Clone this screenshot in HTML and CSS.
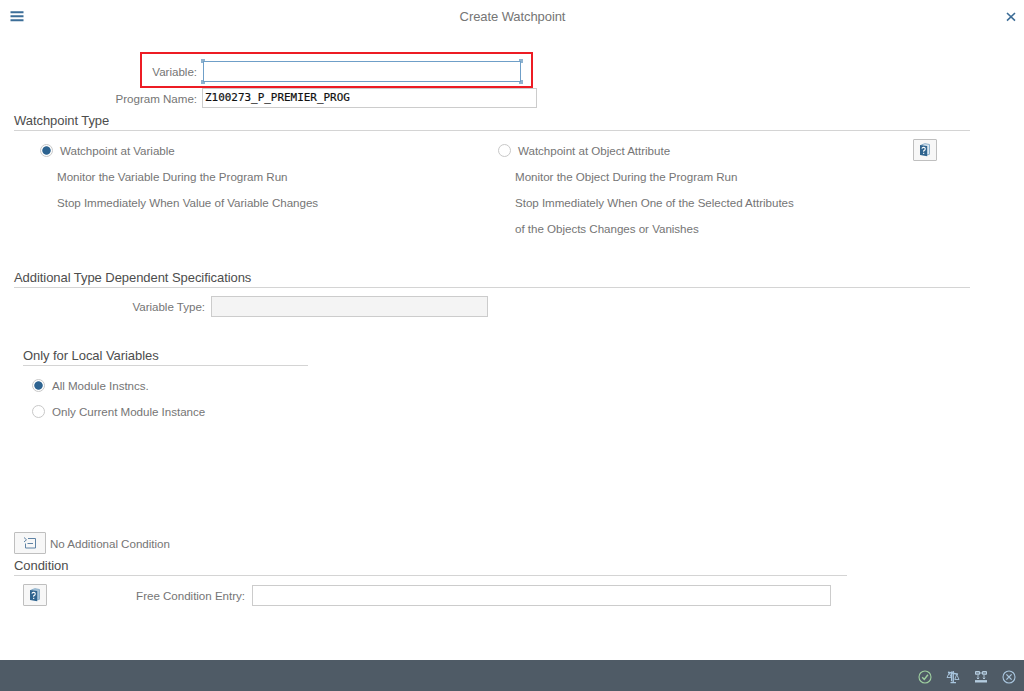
FILE: index.html
```html
<!DOCTYPE html>
<html lang="en">

<head>
    <meta charset="UTF-8">
    <meta name="viewport" content="width=device-width, initial-scale=1.0">
    <title>Create Watchpoint</title>
    <link rel="stylesheet" href="styles.css">
</head>

<body>
    <div class="dialog">
        <header class="header">
            <svg class="menuicon" width="14" height="11" viewBox="0 0 14 11">
                <path d="M0.5 1.3h13M0.5 5.3h13M0.5 9.3h13" stroke="#3c6e98" stroke-width="1.9" />
            </svg>
            <h1>Create Watchpoint</h1>
            <svg class="closeicon" width="10" height="10" viewBox="0 0 10 10">
                <path d="M1 1l8 7.6M9 1l-8 7.6" stroke="#3c6c96" stroke-width="1.6" />
            </svg>
        </header>

        <main class="content">
            <div class="highlight">
                <label class="label" for="variable">Variable:</label>
                <div class="focusbox">
                    <input class="field variable" id="variable" type="text">
                    <span class="corner topleft"></span>
                    <span class="corner topright"></span>
                    <span class="corner bottomleft"></span>
                    <span class="corner bottomright"></span>
                </div>
            </div>
            <div class="programrow">
                <label class="label" for="program">Program Name:</label>
                <input class="field program" id="program" type="text" value="Z100273_P_PREMIER_PROG">
            </div>

            <section class="typesection">
                <h2>Watchpoint Type</h2>
                <div class="types">
                    <div class="typecolumn">
                        <label class="option"><input type="radio" name="type" checked><span>Watchpoint at Variable</span></label>
                        <p>Monitor the Variable During the Program Run</p>
                        <p>Stop Immediately When Value of Variable Changes</p>
                    </div>
                    <div class="typecolumn">
                        <label class="option"><input type="radio" name="type"><span>Watchpoint at Object Attribute</span></label>
                        <p>Monitor the Object During the Program Run</p>
                        <p>Stop Immediately When One of the Selected Attributes</p>
                        <p>of the Objects Changes or Vanishes</p>
                    </div>
                    <button class="iconbutton" aria-label="Help">
                        <svg width="12" height="14" viewBox="0 0 12 14">
                            <path d="M2.5 1.8L6 .7l4.5.8v9.8L8 12z" fill="#dce8f1" stroke="#8db0cb" stroke-width="1" />
                            <path d="M1 2l7.2.9v10.3L1 12z" fill="#2f648f" />
                            <path d="M2.9 5.7q.3-1.4 1.8-1.3 1.7.2 1.5 1.7-.1 1-1.5 1.7v1M4.7 9.8v1.2" fill="none" stroke="#fff" stroke-width="1.1" />
                        </svg>
                    </button>
                </div>
            </section>

            <section class="specsection">
                <h2>Additional Type Dependent Specifications</h2>
                <div class="variabletype">
                    <label class="label" for="vartype">Variable Type:</label>
                    <input class="field" id="vartype" type="text" disabled>
                </div>
                <div class="localvariables">
                    <h2>Only for Local Variables</h2>
                    <label class="option"><input type="radio" name="instance" checked><span>All Module Instncs.</span></label>
                    <label class="option"><input type="radio" name="instance"><span>Only Current Module Instance</span></label>
                </div>
            </section>

            <section class="conditionsection">
                <div class="additional">
                    <button class="iconbutton wide" aria-label="Additional condition">
                        <svg width="14" height="14" viewBox="0 0 14 14">
                            <path d="M1 1.5l2.5 2.3L1 6M5 2.5h7.5v9.5H2.5V7.5M4.5 7.5h5.5" fill="none" stroke="#5f83a5" stroke-width="1" />
                        </svg>
                    </button>
                    <span>No Additional Condition</span>
                </div>
                <h2>Condition</h2>
                <div class="conditionrow">
                    <button class="iconbutton" aria-label="Help">
                        <svg width="12" height="14" viewBox="0 0 12 14">
                            <path d="M2.5 1.8L6 .7l4.5.8v9.8L8 12z" fill="#a8c4d9" stroke="#8db0cb" stroke-width="1" />
                            <path d="M1 2l7.2.9v10.3L1 12z" fill="#2f648f" />
                            <path d="M2.9 5.7q.3-1.4 1.8-1.3 1.7.2 1.5 1.7-.1 1-1.5 1.7v1M4.7 9.8v1.2" fill="none" stroke="#fff" stroke-width="1.1" />
                        </svg>
                    </button>
                    <label class="label" for="condition">Free Condition Entry:</label>
                    <input class="field" id="condition" type="text">
                </div>
            </section>
        </main>

        <footer class="footer">
            <!-- confirm -->
            <svg width="14" height="14" viewBox="0 0 14 14" fill="none" stroke="#9fd0a0">
                <circle cx="7" cy="7" r="6" stroke-width="1.1" />
                <path d="M4.2 7.2l2.1 2.2 3.6-4.6" stroke-width="1.5" />
            </svg>
            <!-- check -->
            <svg width="14" height="14" viewBox="0 0 14 14" fill="none" stroke="#a9c6df">
                <path d="M2 2.3l10 2M7.2 1v11" stroke-width="1.4" />
                <path d="M3.2 3L1 7.5h4.4zM10.7 4.5L8.8 9.5H13z" stroke-width=".9" />
                <path d="M5.5 1.5v9.8M4.5 12.6h5.5" stroke-width="1.1" />
            </svg>
            <!-- options -->
            <svg width="14" height="14" viewBox="0 0 14 14" fill="none" stroke="#b4ccdf">
                <path d="M1.5 1.5h4v2.8h-4zM8.5 1.5h4v2.8h-4zM1.5 3h11" />
                <path d="M4 5v4M2.8 7.8L4 9l1.2-1.2M10 5v4M8.8 7.8L10 9l1.2-1.2" stroke-width=".9" />
                <path d="M1 11.3h12" stroke-width="2.4" />
            </svg>
            <!-- cancel -->
            <svg width="14" height="14" viewBox="0 0 14 14" fill="none" stroke="#a9c6df">
                <circle cx="7" cy="7" r="6" stroke-width="1.1" />
                <path d="M4.4 4.4l5.2 5.2M9.6 4.4L4.4 9.6" stroke-width="1.3" />
            </svg>
        </footer>
    </div>
</body>

</html>
```

FILE: styles.css
```css
* {
    margin: 0;
    padding: 0;
    box-sizing: border-box;
}

body {
    width: 100vw;
    height: 100vh;
    overflow: hidden;
    background-color: #fff;
    font-family: "Liberation Sans", Arial, sans-serif;
    font-size: 11.6px;
    letter-spacing: -0.03px;
    color: #757575;
}

.dialog {
    height: 100%;
    display: flex;
    flex-direction: column;
}

.header {
    height: 33px;
    padding: 0 8px 0 10px;
    display: flex;
    justify-content: space-between;
    align-items: center;
}

h1 {
    margin-right: 5px;
    font-size: 13px;
    font-weight: normal;
    letter-spacing: -0.08px;
}

h2 {
    height: 18px;
    border-bottom: 1px solid #d4d4d4;
    font-size: 13px;
    font-weight: normal;
    letter-spacing: -0.06px;
    line-height: 15px;
    color: #4d4d4d;
}

.content {
    flex: 1;
    padding: 19px 0 0 14px;
}

.highlight {
    width: 393px;
    height: 36px;
    margin-left: 126px;
    padding-top: 3px;
    border: 2px solid #ed1c24;
    display: flex;
    align-items: center;
}

.highlight .label {
    width: 55px;
}

.label {
    text-align: right;
    white-space: nowrap;
}

.focusbox {
    position: relative;
    margin-left: 6px;
}

.field {
    display: block;
    height: 21px;
    border: 1px solid #ccc;
    border-radius: 0;
    background-color: #fff;
    outline: none;
}

.field:disabled {
    background-color: #f4f4f4;
}

.variable {
    width: 318px;
    border-color: #6f9fc8;
}

/* selection marks on the corners of the focused field */
.corner {
    position: absolute;
    width: 4px;
    height: 4px;
    border: 0 solid #8fb3d0;
}

.topleft {
    top: -2px;
    left: -2px;
    border-width: 2px 0 0 2px;
}

.topright {
    top: -2px;
    right: -2px;
    border-width: 2px 2px 0 0;
}

.bottomleft {
    bottom: -2px;
    left: -2px;
    border-width: 0 0 2px 2px;
}

.bottomright {
    bottom: -2px;
    right: -2px;
    border-width: 0 2px 2px 0;
}

.programrow {
    height: 20px;
    display: flex;
    align-items: center;
}

.programrow .label {
    width: 183px;
    margin-right: 5px;
}

.program {
    width: 335px;
    height: 20px;
    padding: 0 0 1px 2px;
    font-family: "DejaVu Sans Mono", monospace;
    font-size: 10.95px;
    color: #111;
    -webkit-text-stroke: 0.2px #111;
}

.typesection {
    width: 956px;
    margin-top: 5px;
}

.types {
    height: 139px;
    padding-top: 6px;
    display: flex;
}

.typecolumn {
    width: 458px;
    padding-left: 26px;
}

.typecolumn p {
    height: 26px;
    padding-left: 17px;
    line-height: 28px;
    white-space: nowrap;
}

.option {
    height: 26px;
    display: flex;
    align-items: center;
}

.option input {
    appearance: none;
    width: 13px;
    height: 13px;
    margin-right: 7px;
    border: 1px solid #c8c8c8;
    border-radius: 50%;
}

.option input:checked {
    background: radial-gradient(circle, #2d6390 3.8px, #fff 4.6px);
}

.iconbutton {
    width: 24px;
    height: 22px;
    border: 1px solid #bfbfbf;
    border-radius: 1px;
    background-color: #f7f7f7;
    display: flex;
    justify-content: center;
    align-items: center;
}

.types .iconbutton {
    margin: 2px 0 0 -17px;
}

.specsection {
    width: 956px;
    height: 262px;
}

.variabletype {
    margin-top: 8px;
    display: flex;
    align-items: center;
}

.variabletype .label {
    width: 191px;
    margin-right: 6px;
}

.variabletype .field {
    width: 277px;
}

.localvariables {
    width: 285px;
    margin: 31px 0 0 9px;
}

.localvariables h2 {
    margin-bottom: 6px;
}

.localvariables .option {
    padding-left: 9px;
}

.additional {
    height: 22px;
    display: flex;
    align-items: center;
    gap: 4px;
}

.wide {
    width: 32px;
}

.conditionsection h2 {
    width: 833px;
    margin-top: 4px;
}

.conditionrow {
    margin: 8px 0 0 9px;
    display: flex;
    align-items: center;
}

.conditionrow .label {
    width: 198px;
    margin-right: 7px;
}

.conditionrow .field {
    width: 579px;
}

.footer {
    height: 31px;
    padding: 2px 8px 0 0;
    background-color: #4f5b66;
    display: flex;
    justify-content: flex-end;
    align-items: center;
    gap: 14px;
}
```
